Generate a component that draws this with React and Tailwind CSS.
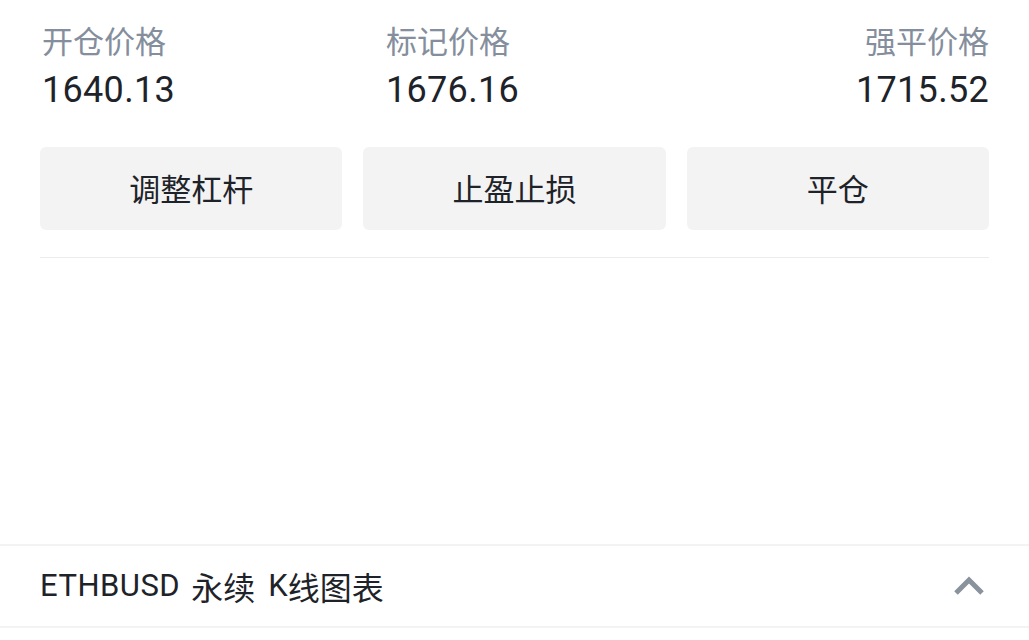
import React from "react";

const cjk = { fontFamily: '"Noto Sans CJK SC", "Noto Sans", sans-serif' };
const num = { fontFamily: 'Roboto, "Noto Sans CJK SC", sans-serif' };

const stats = [
  { label: "开仓价格", value: "1640.13", align: "items-start pl-[2px]" },
  { label: "标记价格", value: "1676.16", align: "items-start" },
  { label: "强平价格", value: "1715.52", align: "items-end" },
];

const actions = ["调整杠杆", "止盈止损", "平仓"];

export default function App() {
  return (
    <div className="flex h-[640px] w-full flex-col overflow-hidden bg-white">
      <div className="px-10">
        <div className="grid grid-cols-[346px_1fr_auto] pt-[20px]">
          {stats.map((s) => (
            <div key={s.label} className={`flex flex-col ${s.align}`}>
              <span className="text-[31px] leading-[40px] text-[#848e9c]" style={cjk}>
                {s.label}
              </span>
              <span className="mt-[8px] text-[36px] leading-[44px] tracking-[0.3px] text-[#1e2329]" style={num}>
                {s.value}
              </span>
            </div>
          ))}
        </div>

        <div className="mt-[35px] grid grid-cols-3 gap-[21px]">
          {actions.map((a) => (
            <button
              key={a}
              className="flex h-[83px] items-center justify-center rounded-md bg-[#f3f3f3] text-[31px] text-[#1e2329]"
              style={cjk}
            >
              {a}
            </button>
          ))}
        </div>

        <div className="mt-[27px] h-px bg-[#ececec]" />
      </div>

      <div className="flex-1" />

      <div className="mb-[12px] border-y-2 border-[#f3f3f3]">
        <div className="flex h-[80px] items-center justify-between pl-10 pr-[44px]">
          <span className="flex items-center text-[#1e2329]" style={cjk}>
            <span className="text-[31px] tracking-[0.5px]" style={num}>ETHBUSD</span>
            <span className="ml-[11px] text-[32px]">永续</span>
            <span className="ml-[13px] text-[31px]" style={num}>K</span>
            <span className="text-[32px]">线图表</span>
          </span>
          <svg width="32" height="22" viewBox="0 0 32 22" fill="none">
            <path d="M3 18 L16 5 L29 18" stroke="#8a929c" strokeWidth="5" strokeLinejoin="miter" />
          </svg>
        </div>
      </div>
    </div>
  );
}
